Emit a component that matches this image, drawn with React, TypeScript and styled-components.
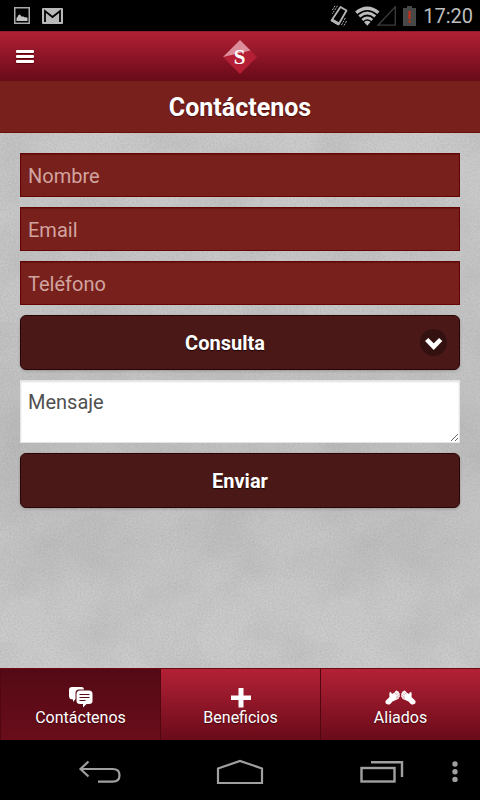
import React from "react";
import styled, { createGlobalStyle, css } from "styled-components";

const grain = encodeURIComponent(
  `<svg xmlns="http://www.w3.org/2000/svg" width="320" height="320">
    <filter id="g" x="0" y="0" width="100%" height="100%">
      <feTurbulence type="fractalNoise" baseFrequency="0.6" numOctaves="3" seed="4" stitchTiles="stitch"/>
      <feColorMatrix values="0 0 0 0 0.25  0 0 0 0 0.25  0 0 0 0 0.25  0.4 0 0 0 -0.12"/>
    </filter>
    <filter id="c" x="0" y="0" width="100%" height="100%">
      <feTurbulence type="fractalNoise" baseFrequency="0.014" numOctaves="5" seed="11" stitchTiles="stitch"/>
      <feColorMatrix values="0 0 0 0 0.3  0 0 0 0 0.3  0 0 0 0 0.3  0.4 0 0 0 -0.14"/>
    </filter>
    <rect width="320" height="320" filter="url(#c)"/>
    <rect width="320" height="320" filter="url(#g)"/>
  </svg>`
);

const GlobalStyle = createGlobalStyle`
  *, *::before, *::after { box-sizing: border-box; }
  body {
    margin: 0;
    background: #000;
    font-family: Roboto, "Noto Sans", sans-serif;
  }
`;

const Screen = styled.div`
  display: flex;
  flex-direction: column;
  min-height: 100vh;
`;

const StatusBar = styled.div`
  display: flex;
  align-items: center;
  justify-content: space-between;
  height: 31px;
  padding: 0 7px 0 14px;
  background: #000;
  color: #bebebe;
`;

const StatusGroup = styled.div<{ $gap: number }>`
  display: flex;
  align-items: center;
  gap: ${(p) => p.$gap}px;
`;

const Clock = styled.time`
  font-size: 20px;
  line-height: 30px;
`;

const AppHeader = styled.header`
  display: grid;
  grid-template-columns: 1fr auto 1fr;
  align-items: center;
  height: 50px;
  padding: 0 16px;
  border-top: 1px solid #94192b;
  background: linear-gradient(#b12035, #680a18);
`;

const MenuButton = styled.button`
  display: flex;
  flex-direction: column;
  justify-content: center;
  gap: 2px;
  width: 18px;
  height: 32px;
  padding: 0;
  border: 0;
  background: none;
  cursor: pointer;
`;

const MenuLine = styled.span`
  height: 3px;
  border-radius: 1px;
  background: #fff;
  box-shadow: 0 1px 1px #5c0008;
`;

const PageTitle = styled.h1`
  margin: 0;
  padding: 3px 16px 0;
  border-bottom: 1px solid #6b0f0c;
  background: #78201b;
  color: #fff;
  font-size: 25px;
  font-weight: 700;
  line-height: 48px;
  text-align: center;
  text-shadow: 0 1px 1px #4a1010;
`;

const Content = styled.main`
  flex: 1;
  padding: 20px;
  background:
    url("data:image/svg+xml,${grain}"),
    linear-gradient(#cdcdcd 0%, #c3c3c3 60%, #cecece 100%);
`;

const Form = styled.form`
  display: flex;
  flex-direction: column;
  gap: 10px;
`;

const textControl = css`
  display: block;
  width: 100%;
  margin: 0;
  border-radius: 0;
  font-family: inherit;
  font-size: 20px;
  outline: none;
`;

const TextField = styled.input`
  ${textControl}
  height: 44px;
  border: 1px solid #640404;
  padding: 1px 7px 0;
  background: #78201b;
  color: #fff;
  box-shadow: inset 0 1px 1px #651713;
  &::placeholder { color: #d2a4a0; opacity: 1; }
`;

const MessageField = styled.textarea`
  ${textControl}
  height: 63px;
  border: 1px solid #e4e4e4;
  padding: 8px 7px;
  background: #fff;
  color: #333;
  line-height: 26px;
  resize: vertical;
  box-shadow: inset 0 1px 2px #e0e0e0;
  &::placeholder { color: #505050; opacity: 1; }
`;

const darkButton = css`
  width: 100%;
  height: 55px;
  border: 1px solid #2b0506;
  border-radius: 6px;
  background: #4a1817;
  color: #fff;
  font-family: inherit;
  font-size: 20px;
  font-weight: 700;
  text-shadow: 0 1px 1px #1c0404;
  box-shadow: 0 1px 3px rgba(0, 0, 0, 0.2);
  cursor: pointer;
`;

const SelectWrap = styled.div`
  position: relative;
  display: flex;
`;

const Select = styled.select`
  ${darkButton}
  appearance: none;
  padding: 0 49px 0 19px;
  text-align: center;
  text-align-last: center;
`;

const ChevronBadge = styled.span`
  position: absolute;
  top: 14px;
  right: 13px;
  display: flex;
  width: 27px;
  height: 27px;
  border-radius: 50%;
  background: #331110;
  pointer-events: none;
`;

const SubmitButton = styled.button`
  ${darkButton}
`;

const TabBar = styled.nav`
  display: grid;
  grid-template-columns: repeat(3, 1fr);
  height: 72px;
  border-top: 1px solid #6d0a10;
`;

const Tab = styled.a<{ $active?: boolean }>`
  display: flex;
  flex-direction: column;
  align-items: center;
  padding-top: 17px;
  border-left: 1px solid #52060f;
  background: ${(p) =>
    p.$active
      ? "linear-gradient(#530a14, #6a0d1b)"
      : "linear-gradient(#b32136, #690b19)"};
  color: #fff;
  font-size: 16px;
  line-height: 20px;
  text-decoration: none;
  text-shadow: 0 1px 1px #40040c;
`;

const SystemNav = styled.div`
  display: grid;
  grid-template-columns: 1fr 80px 1fr;
  height: 60px;
  background: #000;
`;

const SystemGroup = styled.div<{ $align: "start" | "end" }>`
  display: flex;
  align-items: center;
  gap: 48px;
  justify-content: ${(p) => (p.$align === "end" ? "flex-end" : "flex-start")};
  padding: 0 ${(p) => (p.$align === "end" ? 22 : 0)}px 0
    ${(p) => (p.$align === "start" ? 78 : 0)}px;
`;

const SystemButton = styled.button`
  display: flex;
  align-items: center;
  justify-content: center;
  padding: 3px 0 0;
  border: 0;
  background: none;
  cursor: pointer;
`;

const PictureIcon = () => (
  <svg width="16" height="17" viewBox="0 0 16 17">
    <rect x="0.75" y="0.75" width="14.5" height="15.5" fill="#000" stroke="#aaa" strokeWidth="1.5" />
    <path d="M2.500 14V11L3.500 10L4.500 8L6 7.500L7.500 9.500H9.500L11 10.500L12 10L13.500 11V14Z" fill="#c4c4c4" />
  </svg>
);

const MailIcon = () => (
  <svg width="21" height="16" viewBox="0 0 21 16">
    <rect width="21" height="16" rx="1" fill="#b9b9b9" />
    <path d="M3 14V3L10.5 9L18 3V14" fill="none" stroke="#000" strokeWidth="1.8" />
  </svg>
);

const VibrateIcon = () => (
  <svg width="19" height="22" viewBox="0 0 19 22" fill="none" stroke="#b5b5b5">
    <path d="M11.500 2L17.500 5.500L9.500 19.500L2.500 15.500Z" strokeWidth="1.8" strokeLinejoin="round" />
    <path d="M3 15L9.500 18.800" strokeWidth="3" />
    <path d="M8.500 0.800L3.200 9M6 0.800L2.800 6M16.300 13L12 21M17.500 16L14.500 21.500" strokeWidth="1" strokeDasharray="2 1" />
  </svg>
);

const ConnectionIcon = () => (
  <svg width="41" height="20" viewBox="0 0 41 20" fill="none" stroke="#bdbdbd">
    <path d="M23 19.200H40.300V0.800Z" stroke="#3d3d3d" strokeWidth="1.300" />
    <path d="M1.200 6.700Q12.300 -2.300 23.400 6.700" strokeWidth="3.400" />
    <path d="M4.300 10.400Q12.300 3.800 20.300 10.400" strokeWidth="2.900" />
    <path d="M7.300 14Q12.300 9.800 17.300 14" strokeWidth="2.700" />
    <path d="M9 16Q12.300 13.600 15.600 16L12.300 19.800Z" fill="#bdbdbd" stroke="none" />
  </svg>
);

const BatteryIcon = () => (
  <svg width="13" height="20" viewBox="0 0 13 20">
    <path d="M4 0H9V2H13V20H0V2H4Z" fill="#484848" />
    <path d="M5.5 5H7.5V13H5.5ZM5.5 14.5H7.5V16.5H5.5Z" fill="#d22c12" />
  </svg>
);

const Logo = () => (
  <svg width="34" height="34" viewBox="0 0 34 34" role="img" aria-label="S">
    <path d="M17 0L34 17L17 34L0 17Z" fill="#b41f35" />
    <path d="M17 0L27.5 10.5L0 17Z" fill="#dc8d9b" />
    <text x="16.5" y="24" fill="#fff" fontFamily='"Liberation Serif", serif' fontWeight="700" fontSize="21" textAnchor="middle">S</text>
  </svg>
);

const ChevronIcon = () => (
  <svg width="27" height="27" viewBox="0 0 27 27">
    <path d="M6.700 10.500L13.700 17.700L20.700 10.500" fill="none" stroke="#fff" strokeWidth="4.600" />
  </svg>
);

const ChatIcon = () => (
  <svg width="24" height="22" viewBox="0 0 24 22">
    <path d="M3 1H13Q15 1 15 3.5H10Q6.500 3.500 6.500 7V13L4 16V13.500Q0 13.500 0 10V4Q0 1 3 1Z" fill="#fff" />
    <path d="M11 4.500H20Q23.500 4.500 23.500 8V15Q23.500 18 20 18H17.500L14 21.500V18H11Q7.500 18 7.500 15V8Q7.500 4.500 11 4.500Z" fill="#fff" />
    <path d="M10.500 8.500H20.500M10.500 11.500H20.500M10.500 14.500H16.500" stroke="#5e0c18" strokeWidth="1.200" />
  </svg>
);

const PlusIcon = () => (
  <svg width="20" height="22" viewBox="0 0 20 22">
    <path d="M7.500 2H12.500V9.500H20V14H12.500V21.500H7.500V14H0V9.500H7.500Z" fill="#fff" />
  </svg>
);

const Hand = () => (
  <>
    <path d="M0.500 15L4.500 11Q4 7.500 4.800 6Q6.300 5.500 7 8L9.500 6.500L10.500 5Q12 4 12.500 5.300Q14 5 14 6.800Q15.300 7.500 14.600 9Q15.500 10.500 14 11.500Q14 13 12.500 13.300L7.500 15.500L5 18.200Q1.500 19 0.500 17Z" fill="#fff" />
    <path d="M9.500 8L11.500 6.500M11 9L13.300 7.500M11.500 10.800L14 9.500M11 12.300L13.500 11.300" stroke="#c98a94" strokeWidth="0.700" />
  </>
);

const HandsIcon = () => (
  <svg width="31" height="22" viewBox="0 0 31 22">
    <Hand />
    <g transform="translate(31 0) scale(-1 1)">
      <Hand />
    </g>
  </svg>
);

const BackIcon = () => (
  <svg width="44" height="24" viewBox="0 0 44 24" fill="none" stroke="#a0a0a0" strokeWidth="2.200">
    <path d="M10.500 1.500L2.500 9L10.500 16.500M2.500 9H34.500Q41.500 9 41.500 15.200Q41.500 21.700 34.500 21.700H20" />
  </svg>
);

const HomeIcon = () => (
  <svg width="48" height="26" viewBox="0 0 48 26" fill="none" stroke="#a0a0a0" strokeWidth="2.200">
    <path d="M2 24V9.500L24 2L46 9.500V24Z" />
  </svg>
);

const RecentIcon = () => (
  <svg width="44" height="23" viewBox="0 0 44 23" fill="none" stroke="#a0a0a0">
    <rect x="1.500" y="8" width="33" height="13.500" strokeWidth="2.400" />
    <path d="M11 2.200H42V17" strokeWidth="2.400" />
  </svg>
);

const DotsIcon = () => (
  <svg width="6" height="22" viewBox="0 0 6 22" fill="#a0a0a0">
    <circle cx="3" cy="3" r="2.700" />
    <circle cx="3" cy="10.700" r="2.700" />
    <circle cx="3" cy="18.400" r="2.700" />
  </svg>
);

export default function App() {
  return (
    <Screen>
      <GlobalStyle />
      <StatusBar>
        <StatusGroup $gap={12}>
          <PictureIcon />
          <MailIcon />
        </StatusGroup>
        <StatusGroup $gap={7}>
          <VibrateIcon />
          <ConnectionIcon />
          <BatteryIcon />
          <Clock>17:20</Clock>
        </StatusGroup>
      </StatusBar>
      <AppHeader>
        <MenuButton type="button" aria-label="Menú">
          <MenuLine />
          <MenuLine />
          <MenuLine />
        </MenuButton>
        <Logo />
      </AppHeader>
      <PageTitle>Contáctenos</PageTitle>
      <Content>
        <Form onSubmit={(e) => e.preventDefault()}>
          <TextField type="text" name="nombre" placeholder="Nombre" aria-label="Nombre" />
          <TextField type="email" name="email" placeholder="Email" aria-label="Email" />
          <TextField type="tel" name="telefono" placeholder="Teléfono" aria-label="Teléfono" />
          <SelectWrap>
            <Select name="tipo" aria-label="Tipo de mensaje" defaultValue="consulta">
              <option value="consulta">Consulta</option>
            </Select>
            <ChevronBadge>
              <ChevronIcon />
            </ChevronBadge>
          </SelectWrap>
          <MessageField name="mensaje" placeholder="Mensaje" aria-label="Mensaje" />
          <SubmitButton type="submit">Enviar</SubmitButton>
        </Form>
      </Content>
      <TabBar>
        <Tab href="#contactenos" $active aria-current="page">
          <ChatIcon />
          Contáctenos
        </Tab>
        <Tab href="#beneficios">
          <PlusIcon />
          Beneficios
        </Tab>
        <Tab href="#aliados">
          <HandsIcon />
          Aliados
        </Tab>
      </TabBar>
      <SystemNav>
        <SystemGroup $align="start">
          <SystemButton type="button" aria-label="Atrás">
            <BackIcon />
          </SystemButton>
        </SystemGroup>
        <SystemButton type="button" aria-label="Inicio">
          <HomeIcon />
        </SystemButton>
        <SystemGroup $align="end">
          <SystemButton type="button" aria-label="Recientes">
            <RecentIcon />
          </SystemButton>
          <SystemButton type="button" aria-label="Más opciones">
            <DotsIcon />
          </SystemButton>
        </SystemGroup>
      </SystemNav>
    </Screen>
  );
}
